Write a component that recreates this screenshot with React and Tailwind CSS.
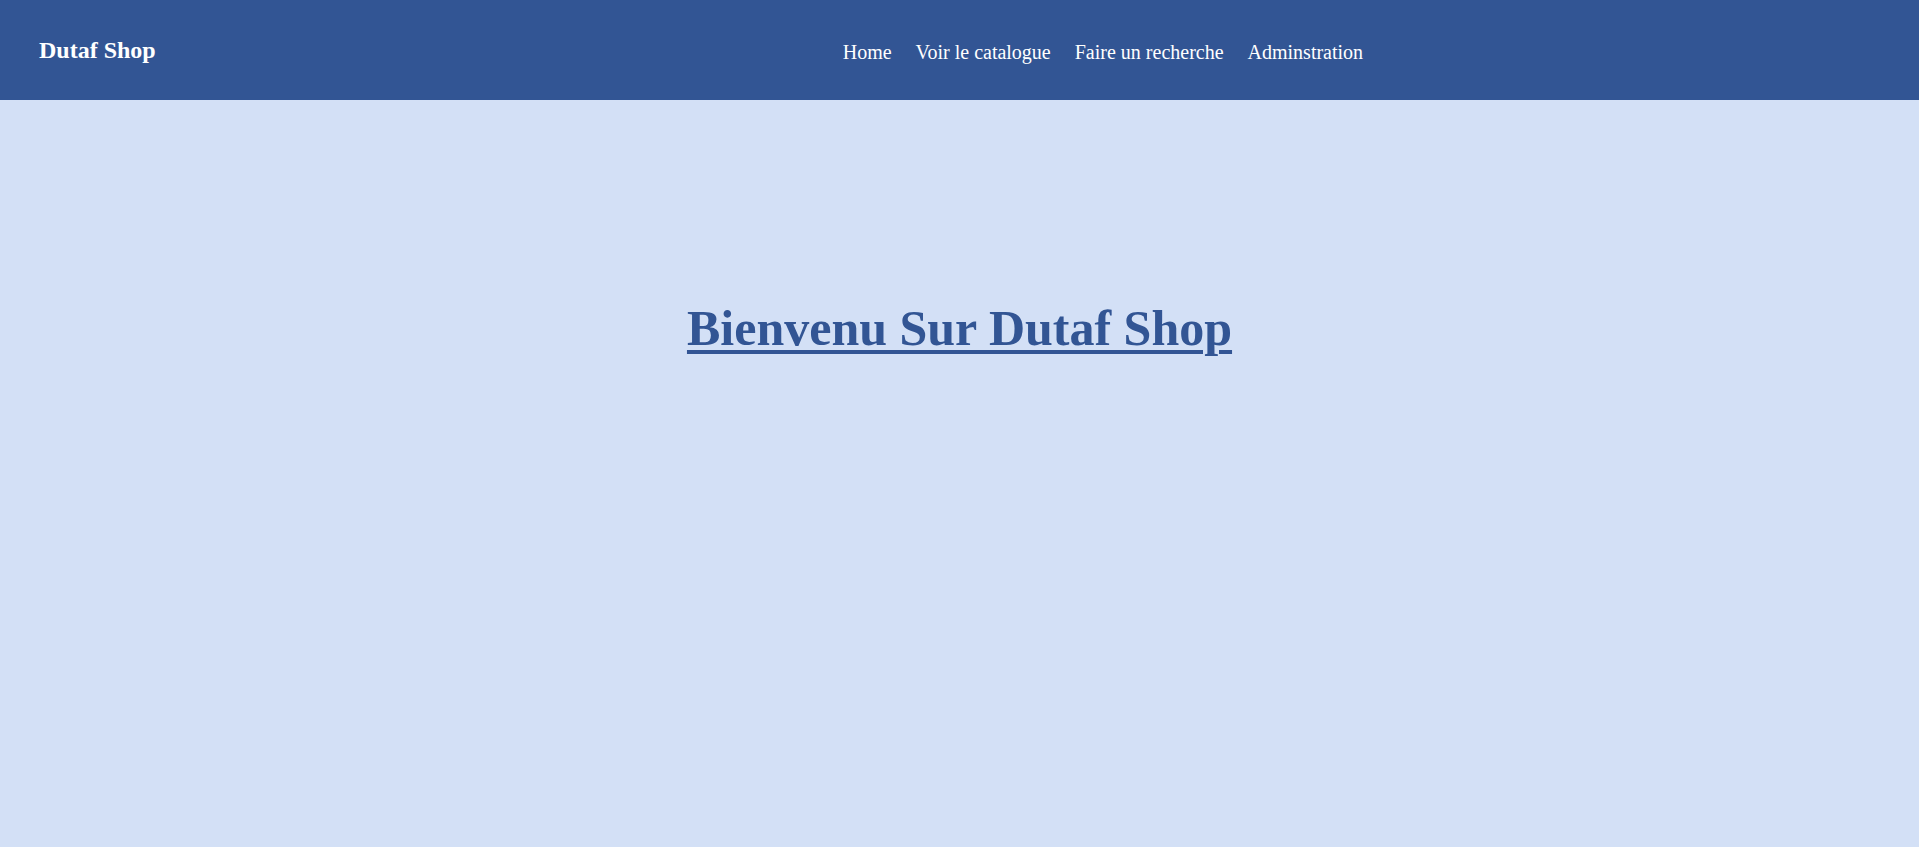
import React from 'react';

const links = ['Home', 'Voir le catalogue', 'Faire un recherche', 'Adminstration'];

const App = () => {
    return (
        <div className="min-h-screen bg-[#d3e0f6] font-['Liberation_Serif',_'Times_New_Roman',_serif]">
            <header className="h-[100px] bg-[#325594] flex items-center px-[39px]">
                <h2 className="text-[24px] leading-[28px] font-bold text-white">Dutaf Shop</h2>
                <nav className="mt-[3px] ml-[687px]">
                    <ul className="flex gap-[24px] text-[20px] leading-[24px] text-white">
                        {links.map((l) => (
                            <li key={l}><a href="#">{l}</a></li>
                        ))}
                    </ul>
                </nav>
            </header>
            <main className="pt-[200px] text-center">
                <h1 className="text-[50px] leading-[56px] font-bold text-[#325594] underline decoration-[4px] underline-offset-[5px]">
                    Bienvenu Sur Dutaf Shop
                </h1>
            </main>
        </div>
    );
}

export default App;
